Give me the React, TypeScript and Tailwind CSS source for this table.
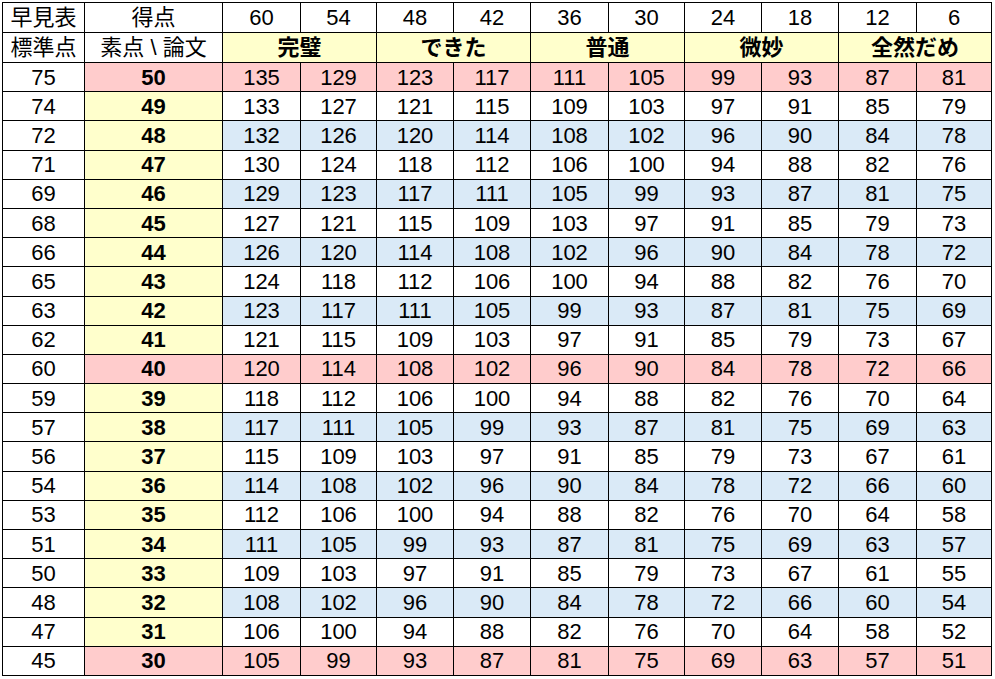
const points = [60, 54, 48, 42, 36, 30, 24, 18, 12, 6];
const labels = ["完璧", "できた", "普通", "微妙", "全然だめ"];
const scores = Array.from({ length: 21 }, (_, i) => 50 - i);

const font = { fontFamily: '"Liberation Sans", "Noto Sans CJK JP", sans-serif' };

function rowBg(s: number) {
  if (s % 10 === 0) return "bg-[#ffcccc]";
  if (s % 2 === 0) return "bg-[#daeaf7]";
  return "bg-white";
}

export default function App() {
  return (
    <div className="bg-white w-[995px] h-[679px] pt-[2px] pl-[2px]" style={font}>
      <div className="grid w-max h-[674px] bg-black p-px gap-px grid-cols-[81px_137px_77px_75px_76px_76px_77px_75px_76px_76px_77px_74px] grid-rows-[29px_29px_repeat(21,minmax(0,1fr))] text-[22px] leading-none text-black">
        <div className="bg-white flex items-center justify-center pt-px">早見表</div>
        <div className="bg-white flex items-center justify-center pt-px">得点</div>
        {points.map((p) => (
          <div key={p} className="bg-white flex items-center justify-center pt-px">
            {p}
          </div>
        ))}

        <div className="bg-white flex items-center justify-center pt-px">標準点</div>
        <div className="bg-white flex items-center justify-center pt-px">素点 \ 論文</div>
        {labels.map((l) => (
          <div key={l} className="col-span-2 bg-[#ffffcc] flex items-center justify-center font-bold pt-px">
            {l}
          </div>
        ))}

        {scores.map((s) => {
          // 標準点 is rounded, the table cells use the floored value
          const std = Math.round(s * 1.5);
          const base = Math.floor(s * 1.5);
          const bg = rowBg(s);
          return [
            <div key={`a${s}`} className="bg-white flex items-center justify-center pt-px">
              {std}
            </div>,
            <div
              key={`b${s}`}
              className={`${s % 10 === 0 ? "bg-[#ffcccc]" : "bg-[#ffffcc]"} flex items-center justify-center font-bold pt-px`}
            >
              {s}
            </div>,
            ...points.map((p) => (
              <div key={`c${s}-${p}`} className={`${bg} flex items-center justify-center pt-px`}>
                {base + p}
              </div>
            )),
          ];
        })}
      </div>
    </div>
  );
}
